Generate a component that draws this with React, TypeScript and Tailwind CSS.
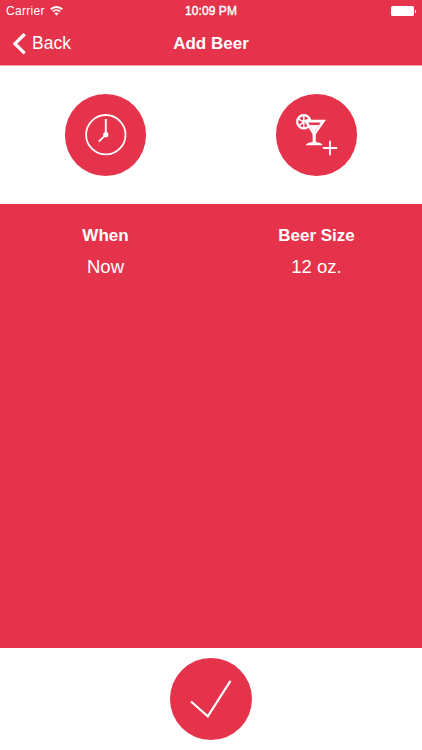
import React from "react";

function StatusBar() {
  return (
    <div className="grid h-[22px] grid-cols-3 items-center text-[12px] leading-[22px]">
      <div className="flex items-center gap-[5px] pl-[6px]">
        <span className="tracking-[0.3px]">Carrier</span>
        <svg width="13" height="10" viewBox="0 0 13 10" fill="none" stroke="white" strokeWidth="1.9">
          <path d="M.8 3.3C4 .2 9 .2 12.2 3.3M2.9 5.6c2-2 5.2-2 7.2 0" />
          <path d="M6.5 9.5 4.3 7.3c1.2-1.1 3.2-1.1 4.4 0z" fill="white" stroke="none" />
        </svg>
      </div>
      <span className="text-center text-[12px] tracking-[0.1px] [-webkit-text-stroke:0.4px_white]">10:09 PM</span>
      <div className="flex items-center justify-end pr-[6px]">
        <div className="h-[10px] w-[23px] rounded-[1.5px] bg-white" />
        <div className="ml-px h-[3px] w-px bg-white" />
      </div>
    </div>
  );
}

function NavBar() {
  return (
    <div className="grid h-[43px] grid-cols-3 items-center">
      <div className="flex items-center gap-[6px] pl-[12px]">
        <svg width="14" height="22" viewBox="0 0 14 22" fill="none" stroke="white" strokeWidth="3.3">
          <path d="M12.7 1 3 10.700l9.7 9.7" />
        </svg>
        <span className="-mt-[2px] text-[17.5px] leading-[22px]">Back</span>
      </div>
      <h1 className="text-center text-[17px] font-bold leading-[22px]">Add Beer</h1>
    </div>
  );
}

function ClockIcon() {
  return (
    <svg width="82" height="82" viewBox="0 0 82 82" fill="none" stroke="white">
      <circle cx="40.8" cy="40.7" r="19.7" strokeWidth="1.8" />
      <path d="M40.8 25v15.7l-7 7" strokeWidth="1.9" />
      <circle cx="40.8" cy="40.7" r="2.6" fill="white" stroke="none" />
    </svg>
  );
}

function CocktailIcon() {
  return (
    <svg width="82" height="82" viewBox="0 0 82 82" fill="none" stroke="white">
      <circle cx="27.8" cy="27.8" r="6.6" strokeWidth="2.2" />
      <path d="M27.800 27.800v-6M27.800 27.800l-5.500-3M27.800 27.800l-5 4M27.800 27.800l5.500-3M27.800 27.800v6" strokeWidth="1.5" />
      <path d="M29.800 27.200h17.600L38.200 40.200z" fill="#e5334c" strokeWidth="2.7" />
      <path d="M33.800 31h9l-4.600 7z" fill="white" stroke="none" />
      <path d="M38.2 39v10" strokeWidth="3.2" />
      <path d="M30 51.200c0-2 3.500-2.500 6.900-3.200h2.600c3.400.7 6.900 1.200 6.900 3.200z" fill="white" stroke="none" />
      <path d="M54 46.800v14.400M46.800 54h14.400" strokeWidth="1.8" />
    </svg>
  );
}

function CheckIcon() {
  return (
    <svg width="82" height="82" viewBox="0 0 82 82" fill="none" stroke="white" strokeWidth="2.2">
      <path d="m21 43.5 16.800 14.800 22.700-35.500" />
    </svg>
  );
}

function CircleButton({ label, children }: { label: string; children: React.ReactNode }) {
  return (
    <button aria-label={label} className="size-[81.5px] shrink-0 overflow-hidden rounded-full bg-[#e5334c]">
      {children}
    </button>
  );
}

function Detail({ title, value }: { title: string; value: string }) {
  return (
    <div className="text-center">
      <h2 className="text-[17px] font-bold leading-[22px]">{title}</h2>
      <p className="mt-[9px] text-[18.5px] leading-[22px]">{value}</p>
    </div>
  );
}

export default function App() {
  return (
    <div className="flex h-[750px] w-[422px] flex-col overflow-hidden bg-white font-['Liberation_Sans',sans-serif] text-white">
      <header className="h-[66px] shrink-0 border-b border-[#f2a0ab] bg-[#e5334c]">
        <StatusBar />
        <NavBar />
      </header>
      <section className="grid h-[138px] shrink-0 grid-cols-2 items-center justify-items-center">
        <CircleButton label="When"><ClockIcon /></CircleButton>
        <CircleButton label="Beer size"><CocktailIcon /></CircleButton>
      </section>
      <main className="grid flex-1 grid-cols-2 content-start bg-[#e5334c] pt-[21px]">
        <Detail title="When" value="Now" />
        <Detail title="Beer Size" value="12 oz." />
      </main>
      <footer className="flex h-[102px] shrink-0 justify-center pt-[10px]">
        <CircleButton label="Confirm"><CheckIcon /></CircleButton>
      </footer>
    </div>
  );
}
